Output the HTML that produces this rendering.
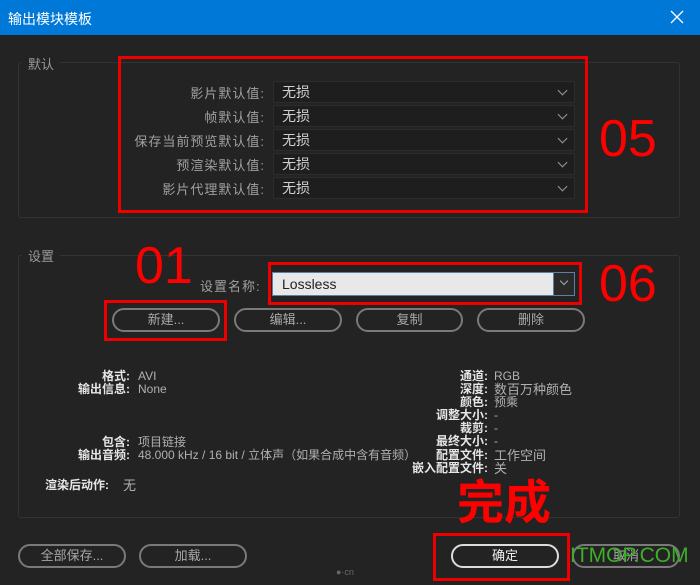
<!DOCTYPE html>
<html><head><meta charset="utf-8"><style>
*{margin:0;padding:0;box-sizing:border-box}
body{width:700px;height:585px;background:#232323;position:relative;overflow:hidden;font-family:"Liberation Sans","Noto Sans CJK SC",sans-serif;color:#b4b4b4}
.a{position:absolute;white-space:nowrap}
.grp{position:absolute;border:1px solid #333;border-radius:3px}
.gl{position:absolute;background:#232323;font-size:13px;color:#9a9a9a;padding:0 6px}
.lab{position:absolute;right:435px;font-size:13px;color:#a0a0a0;text-align:right;letter-spacing:1px}
.dd{position:absolute;left:273px;width:302px;height:22px;background:#1e1e1e;border:1px solid #2c2c2c;border-radius:2px;font-size:14px;color:#d0d0d0;padding-left:8px;line-height:20px}
.dd:after{content:"";position:absolute;right:8px;top:5px;width:6px;height:6px;border-right:1px solid #999;border-bottom:1px solid #999;transform:rotate(45deg)}
.btn{position:absolute;height:24px;border:2px solid #7a7a7a;border-radius:12px;font-size:13px;color:#a8a8a8;text-align:center;line-height:20px}
.red{position:absolute;border:3px solid #e00}
.rn{position:absolute;color:#f00;font-size:52px;line-height:1}
.il{position:absolute;font-size:12px;color:#e6e6e6;font-weight:bold;text-align:right;line-height:13px}
.iv{position:absolute;font-size:12px;color:#b0b0b0;line-height:13px}
</style></head><body>
<div class="a" style="left:0;top:0;width:700px;height:35px;background:#0078d7"></div>
<div class="a" style="left:8px;top:9px;font-size:14px;color:#fff">输出模块模板</div>
<svg class="a" style="left:670px;top:10px" width="14" height="14"><path d="M1 1L13 13M13 1L1 13" stroke="#fff" stroke-width="1.3"/></svg>

<div class="grp" style="left:18px;top:62px;width:662px;height:156px"></div>
<div class="gl" style="left:22px;top:54px">默认</div>
<div class="lab" style="top:83px">影片默认值:</div>
<div class="lab" style="top:107px">帧默认值:</div>
<div class="lab" style="top:131px">保存当前预览默认值:</div>
<div class="lab" style="top:155px">预渲染默认值:</div>
<div class="lab" style="top:179px">影片代理默认值:</div>
<div class="dd" style="top:81px">无损</div>
<div class="dd" style="top:105px">无损</div>
<div class="dd" style="top:129px">无损</div>
<div class="dd" style="top:153px">无损</div>
<div class="dd" style="top:177px">无损</div>
<div class="red" style="left:118px;top:56px;width:470px;height:157px"></div>
<div class="rn" style="left:599px;top:113px">05</div>

<div class="grp" style="left:18px;top:255px;width:662px;height:263px"></div>
<div class="gl" style="left:22px;top:246px">设置</div>
<div class="a" style="left:200px;top:276px;font-size:13px;color:#a0a0a0;letter-spacing:1px">设置名称:</div>
<div class="a" style="left:272px;top:272px;width:303px;height:24px;background:#e8e8e8;border:1px solid #5a7fa8;font-size:14px;color:#222;padding-left:9px;line-height:22px">Lossless</div>
<div class="a" style="left:553px;top:272px;width:22px;height:24px;background:#2a2a2a;border:1px solid #5a7fa8"></div>
<div class="a" style="left:561px;top:278px;width:6px;height:6px;border-right:1px solid #aaa;border-bottom:1px solid #aaa;transform:rotate(45deg)"></div>
<div class="red" style="left:268px;top:262px;width:314px;height:43px"></div>
<div class="rn" style="left:135px;top:240px">01</div>
<div class="rn" style="left:599px;top:258px">06</div>
<div class="btn" style="left:112px;top:308px;width:108px">新建...</div>
<div class="btn" style="left:234px;top:308px;width:108px">编辑...</div>
<div class="btn" style="left:356px;top:308px;width:107px">复制</div>
<div class="btn" style="left:477px;top:308px;width:108px">删除</div>
<div class="red" style="left:104px;top:300px;width:123px;height:41px"></div>

<div class="il" style="right:570px;top:370px">格式:</div><div class="iv" style="left:138px;top:370px">AVI</div>
<div class="il" style="right:570px;top:383px">输出信息:</div><div class="iv" style="left:138px;top:383px">None</div>
<div class="il" style="right:570px;top:436px">包含:</div><div class="iv" style="left:138px;top:436px">项目链接</div>
<div class="il" style="right:570px;top:449px">输出音频:</div><div class="iv" style="left:138px;top:449px">48.000 kHz / 16 bit / 立体声（如果合成中含有音频）</div>
<div class="il" style="left:45px;top:479px">渲染后动作:</div><div class="iv" style="left:123px;top:479px;font-size:13px">无</div>

<div class="il" style="right:212px;top:370px">通道:</div><div class="iv" style="left:494px;top:370px">RGB</div>
<div class="il" style="right:212px;top:383px">深度:</div><div class="iv" style="left:494px;top:383px;font-size:13px">数百万种颜色</div>
<div class="il" style="right:212px;top:396px">颜色:</div><div class="iv" style="left:494px;top:396px">预乘</div>
<div class="il" style="right:212px;top:409px">调整大小:</div><div class="iv" style="left:494px;top:409px">-</div>
<div class="il" style="right:212px;top:422px">裁剪:</div><div class="iv" style="left:494px;top:422px">-</div>
<div class="il" style="right:212px;top:435px">最终大小:</div><div class="iv" style="left:494px;top:435px">-</div>
<div class="il" style="right:212px;top:449px">配置文件:</div><div class="iv" style="left:494px;top:449px;font-size:13px">工作空间</div>
<div class="il" style="right:212px;top:462px">嵌入配置文件:</div><div class="iv" style="left:494px;top:462px;font-size:13px">关</div>

<div class="a" style="left:457px;top:479px;font-size:47px;font-weight:bold;color:#f00;line-height:1">完成</div>

<div class="btn" style="left:18px;top:544px;width:108px">全部保存...</div>
<div class="btn" style="left:139px;top:544px;width:108px">加载...</div>
<div class="a" style="left:336px;top:567px;font-size:9px;color:#666">●·cn</div>
<div class="btn" style="left:451px;top:544px;width:108px;border-color:#ddd;color:#eee">确定</div>
<div class="btn" style="left:572px;top:544px;width:108px">取消</div>
<div class="red" style="left:433px;top:533px;width:137px;height:48px"></div>
<div class="a" style="left:570px;top:545px;font-size:21px;color:#3fae2a;line-height:1">ITMOP.COM</div>
</body></html>
